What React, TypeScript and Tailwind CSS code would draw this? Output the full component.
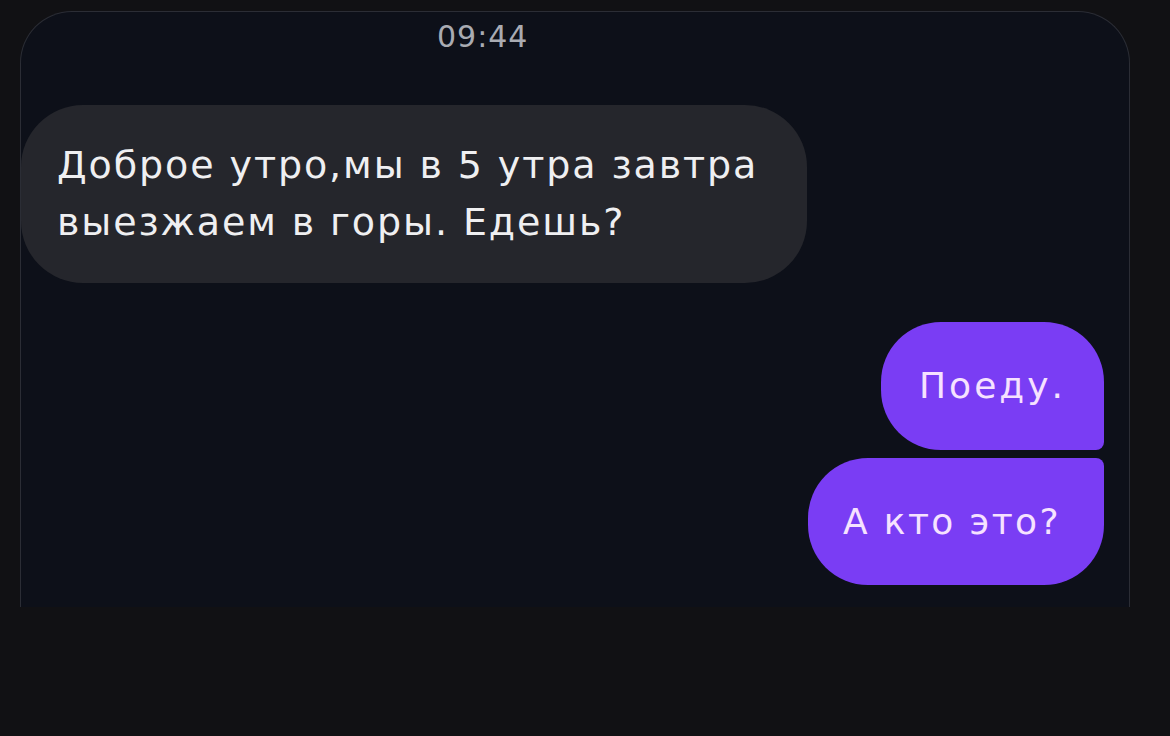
import React from "react";

const font = { fontFamily: '"DejaVu Sans", "Liberation Sans", sans-serif' };

const Chat = () => {
  return (
    <div className="h-[736px] w-[1170px] bg-[#111114] pt-[11px] pl-[20px]" style={font}>
      <div className="h-[596px] w-[1110px] overflow-hidden rounded-t-[52px] border border-b-0 border-[#2b2d35] bg-[#0d1019]">
        <div className="flex h-[93px] pl-[416px] pt-[9px]">
          <span className="text-[30px] leading-[32px] tracking-[1px] text-[#a9abb2]">
            09:44
          </span>
        </div>

        <div className="flex h-[178px] w-[786px] flex-col justify-center rounded-[62px] bg-[#25262c] pl-[36px] text-[38px] leading-[57px] tracking-[1.9px] text-[#efeff1]">
          <p>Доброе утро,мы в 5 утра завтра</p>
          <p>выезжаем в горы. Едешь?</p>
        </div>

        <div className="mt-[39px] flex flex-col items-end gap-[8px] pr-[25px]">
          <div className="flex h-[128px] w-[223px] items-center justify-center rounded-[60px] rounded-br-[8px] bg-[#7a3df4] text-[36px] tracking-[3px] text-[#f6e2ff]">
            Поеду.
          </div>
          <div className="flex h-[127px] w-[296px] items-center justify-center rounded-[60px] rounded-tr-[8px] bg-[#7a3df4] pr-[8px] text-[36px] tracking-[2.4px] text-[#f6e2ff]">
            А кто это?
          </div>
        </div>
      </div>
    </div>
  );
};

export default function App() {
  return <Chat />;
}
